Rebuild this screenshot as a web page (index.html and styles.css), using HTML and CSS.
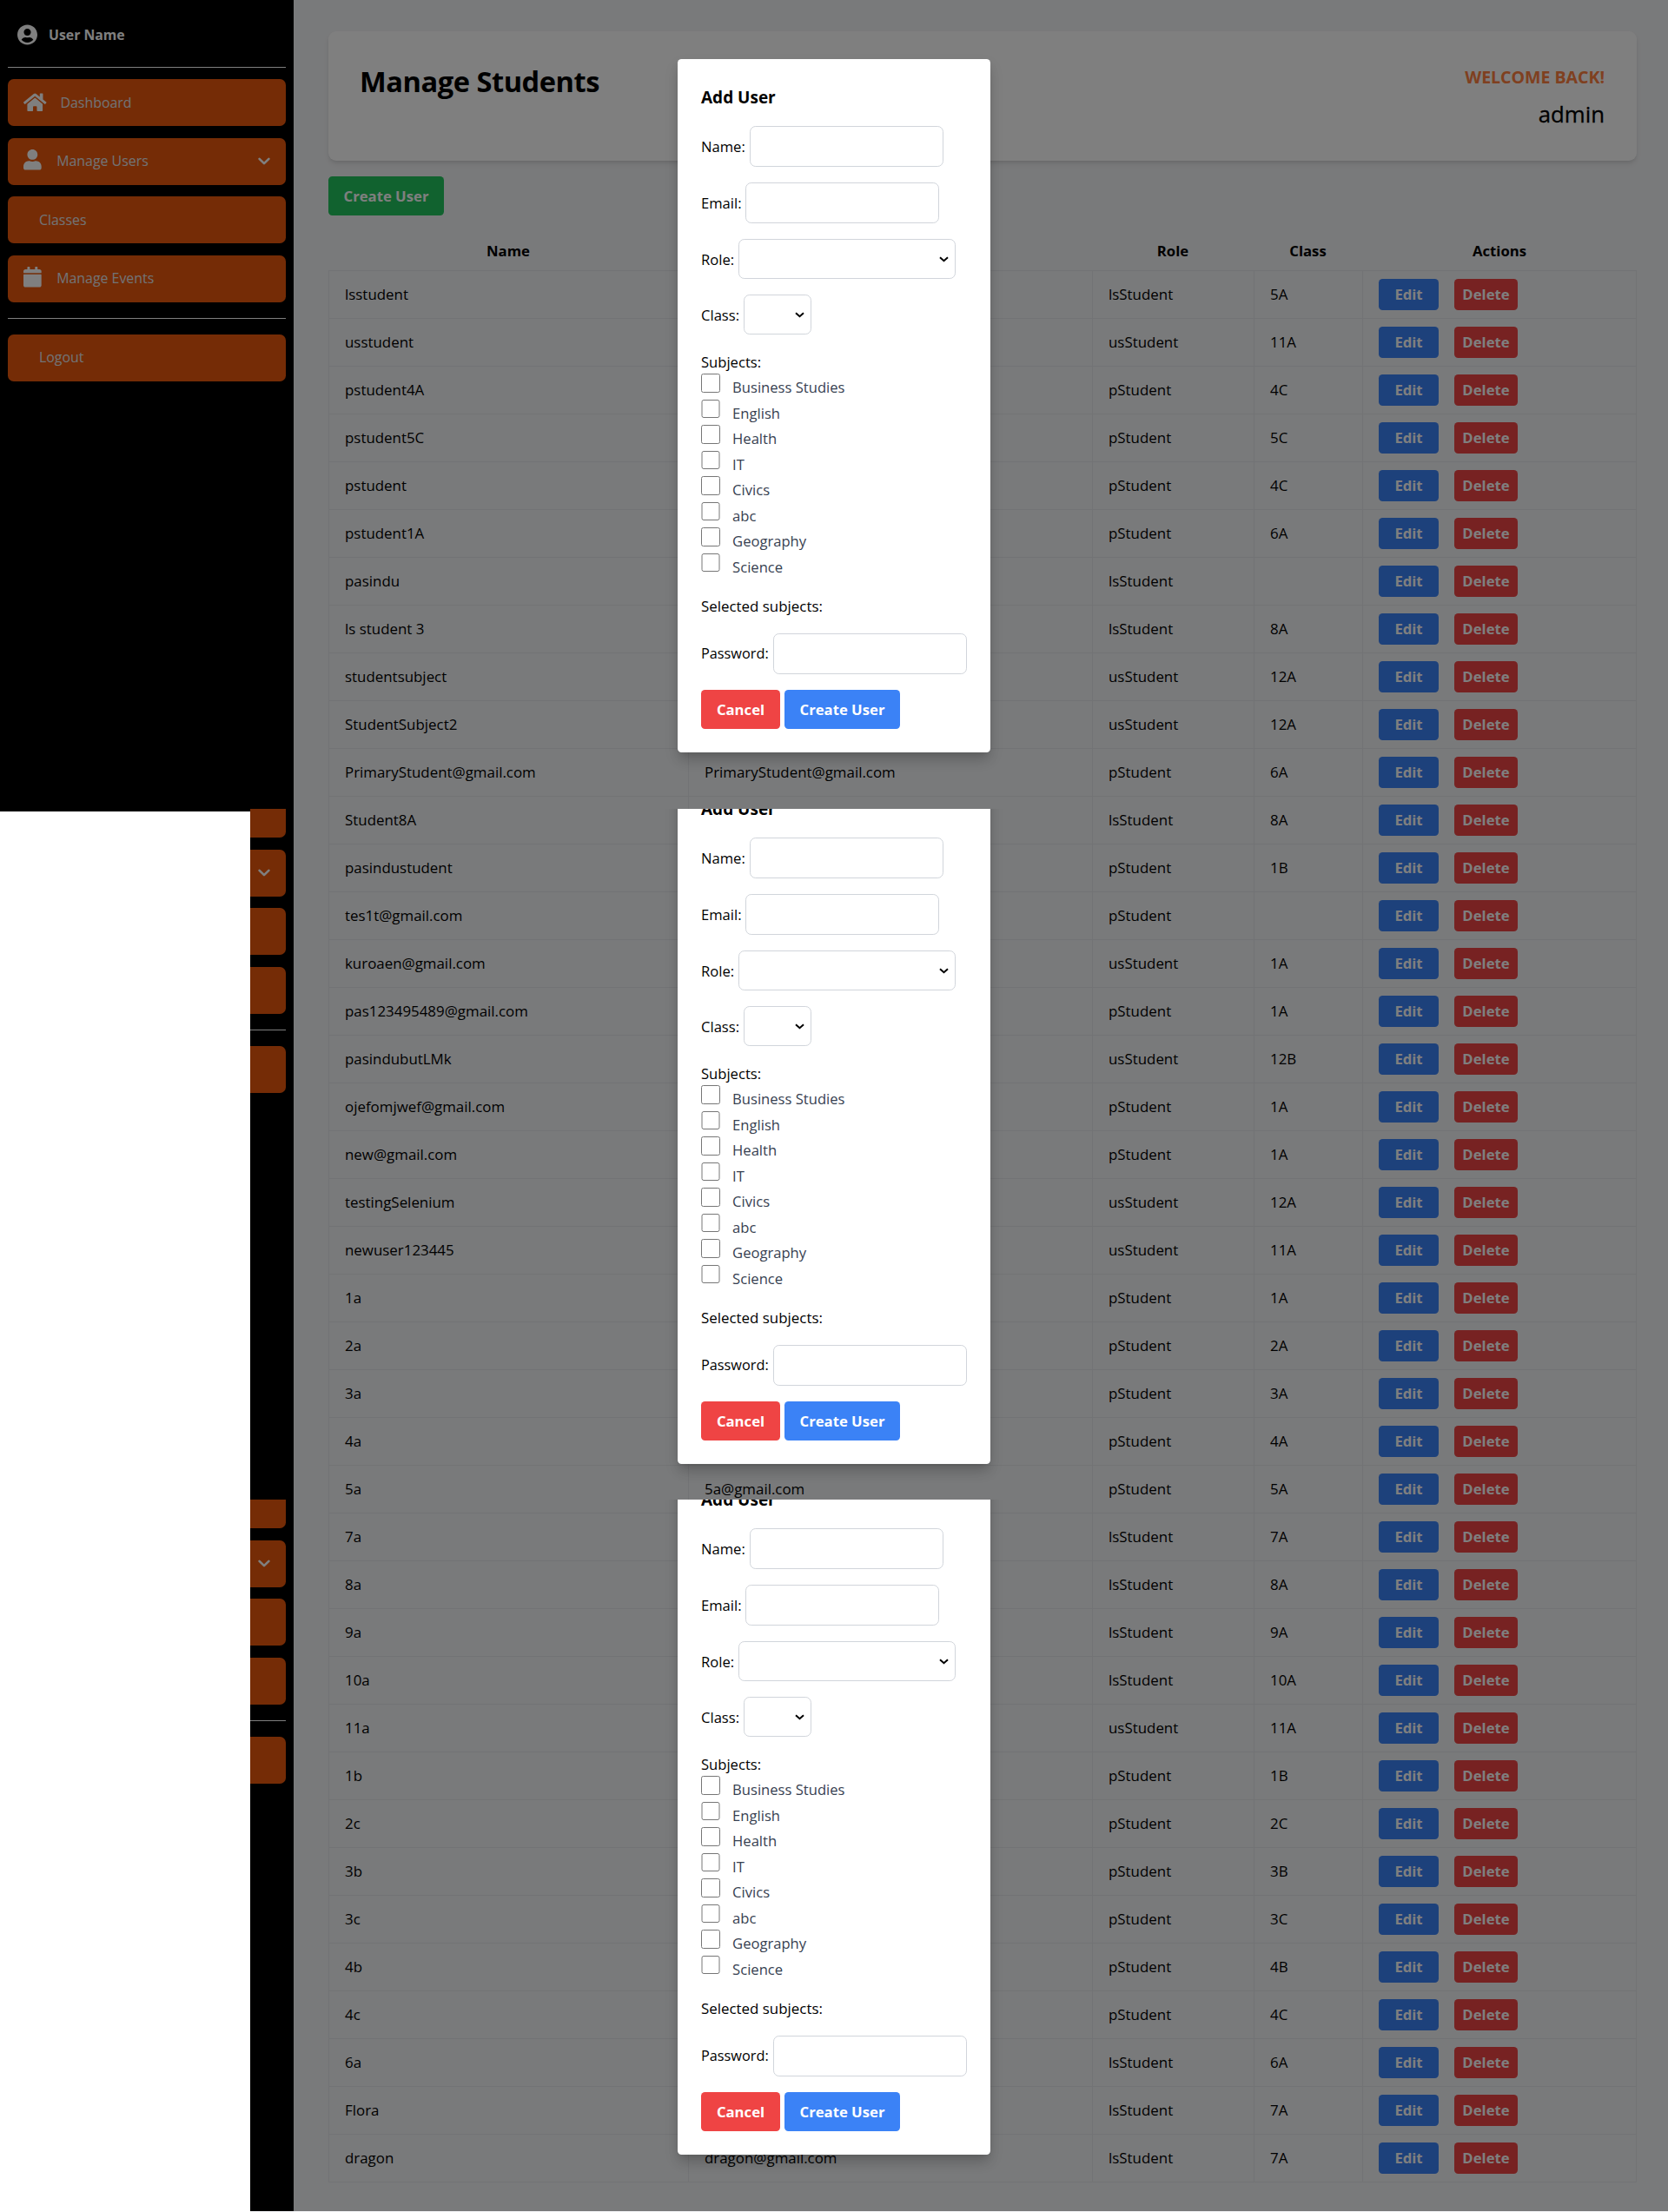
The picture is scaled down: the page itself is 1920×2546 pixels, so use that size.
FILE: index.html
```html
<!DOCTYPE html>
<html lang="en">
<head>
<meta charset="utf-8">
<title>Manage Students</title>
<link rel="stylesheet" href="styles.css">
</head>
<body>
<div class="page">
  <main class="content">
    <header class="banner">
      <h1 class="banner-title">Manage Students</h1>
      <div class="banner-user">
        <p class="welcome">WELCOME BACK!</p>
        <p class="admin">admin</p>
      </div>
    </header>
    <button class="btn btn-green">Create User</button>
    <table class="students">
      <colgroup><col class="c-name"><col class="c-email"><col class="c-role"><col class="c-class"><col class="c-actions"></colgroup>
      <thead><tr><th>Name</th><th></th><th>Role</th><th>Class</th><th>Actions</th></tr></thead>
      <tbody id="rows"></tbody>
    </table>
  </main>
  <div class="frames" id="frames">
    <section class="frame frame-1"></section>
    <section class="frame frame-2"></section>
    <section class="frame frame-3"></section>
  </div>
  <div class="blank"></div>
</div>

<template id="frame-content">
  <div class="frame-body">
    <aside class="sidebar">
      <div class="profile">
        <svg class="icon-profile" viewBox="0 0 496 512"><path d="M248 8C111 8 0 119 0 256s111 248 248 248 248-111 248-248S385 8 248 8zm0 96c48.6 0 88 39.4 88 88s-39.4 88-88 88-88-39.4-88-88 39.4-88 88-88zm0 344c-58.7 0-111.3-26.6-146.5-68.2 18.8-35.4 55.6-59.8 98.5-59.8 2.4 0 4.8.4 7.1 1.1 13 4.2 26.6 6.9 40.9 6.9 14.3 0 28-2.7 40.9-6.9 2.3-.7 4.7-1.1 7.1-1.1 42.9 0 79.7 24.4 98.5 59.8C359.3 421.4 306.7 448 248 448z"/></svg>
        <span class="profile-name">User Name</span>
      </div>
      <nav class="menu">
        <a class="item item-home"><svg class="icon-home" viewBox="0 0 576 512"><path d="M280.37 148.26L96 300.11V464a16 16 0 0 0 16 16l112.06-.29a16 16 0 0 0 15.92-16V368a16 16 0 0 1 16-16h64a16 16 0 0 1 16 16v95.64a16 16 0 0 0 16 16.05L464 480a16 16 0 0 0 16-16V300L295.67 148.26a12.19 12.19 0 0 0-15.3 0zM571.6 251.47L488 182.56V44.05a12 12 0 0 0-12-12h-56a12 12 0 0 0-12 12v72.61L318.47 43a48 48 0 0 0-61 0L4.34 251.47a12 12 0 0 0-1.6 16.9l25.5 31A12 12 0 0 0 45.15 301l235.22-193.74a12.19 12.19 0 0 1 15.3 0L530.9 301a12 12 0 0 0 16.9-1.6l25.5-31a12 12 0 0 0-1.7-16.93z"/></svg><span>Dashboard</span></a>
        <a class="item"><svg class="icon" viewBox="0 0 448 512"><path d="M224 256c70.7 0 128-57.3 128-128S294.7 0 224 0 96 57.3 96 128s57.3 128 128 128zm89.6 32h-16.7c-22.2 10.2-46.9 16-72.9 16s-50.6-5.8-72.9-16h-16.7C60.2 288 0 348.2 0 422.4V464c0 26.5 21.5 48 48 48h352c26.5 0 48-21.5 48-48v-41.6c0-74.2-60.2-134.4-134.4-134.4z"/></svg><span>Manage Users</span><svg class="chevron" viewBox="0 0 14 10"><path d="M1.6 1.8 7 7.2l5.4-5.4"/></svg></a>
        <a class="item item-plain"><span>Classes</span></a>
        <a class="item"><svg class="icon" viewBox="0 0 448 512"><path d="M12 192h424c6.6 0 12 5.4 12 12v260c0 26.5-21.5 48-48 48H48c-26.5 0-48-21.5-48-48V204c0-6.6 5.4-12 12-12zm436-44v-36c0-26.5-21.5-48-48-48h-48V12c0-6.6-5.4-12-12-12h-40c-6.6 0-12 5.4-12 12v52H160V12c0-6.6-5.4-12-12-12h-40c-6.6 0-12 5.4-12 12v52H48C21.5 64 0 85.5 0 112v36c0 6.6 5.4 12 12 12h424c6.6 0 12-5.4 12-12z"/></svg><span>Manage Events</span></a>
      </nav>
      <div class="logout"><a class="item item-plain"><span>Logout</span></a></div>
    </aside>
    <div class="shade"></div>
    <form class="modal">
      <h2 class="modal-title">Add User</h2>
      <div class="field"><label class="l-name">Name:</label><input class="input" type="text"></div>
      <div class="field"><label class="l-email">Email:</label><input class="input" type="text"></div>
      <div class="field"><label class="l-role">Role:</label><select class="select select-role"><option></option></select></div>
      <div class="field"><label class="l-class">Class:</label><select class="select select-class"><option></option></select></div>
      <p class="subjects-title">Subjects:</p>
      <div class="subjects">
        <label class="subject"><input type="checkbox"><span>Business Studies</span></label>
        <label class="subject"><input type="checkbox"><span>English</span></label>
        <label class="subject"><input type="checkbox"><span>Health</span></label>
        <label class="subject"><input type="checkbox"><span>IT</span></label>
        <label class="subject"><input type="checkbox"><span>Civics</span></label>
        <label class="subject"><input type="checkbox"><span>abc</span></label>
        <label class="subject"><input type="checkbox"><span>Geography</span></label>
        <label class="subject"><input type="checkbox"><span>Science</span></label>
      </div>
      <p class="selected">Selected subjects:</p>
      <div class="field"><label class="l-password">Password:</label><input class="input" type="text"></div>
      <div class="modal-actions">
        <button type="button" class="btn btn-red">Cancel</button>
        <button type="button" class="btn btn-blue">Create User</button>
      </div>
    </form>
  </div>
</template>
<script src="app.js"></script>
</body>
</html>
```
FILE: styles.css
```css
* { box-sizing: border-box; margin: 0; padding: 0; }
html { font-size: 18px; }
body {
  font-family: "Open Sans", "Noto Sans", sans-serif;
  font-size: 16.9px;
  line-height: 27px;
  color: #000;
  background: #f3f4f6;
}
button, input, select { font: inherit; }

.page { position: relative; width: 1920px; height: 2546px; overflow: hidden; }
.content { padding: 36px 36px 0 378px; }

.banner {
  display: flex;
  justify-content: space-between;
  height: 149px;
  padding: 36px 37px 0 36px;
  margin-bottom: 18px;
  background: #fff;
  border-radius: 9px;
  box-shadow: 0 4px 6px -1px rgba(0, 0, 0, .1), 0 2px 4px -2px rgba(0, 0, 0, .1);
}
.banner-title { font-size: 32.6px; line-height: 44px; font-weight: 700; letter-spacing: -.45px; }
.banner-user { text-align: right; }
.welcome { font-size: 19.6px; line-height: 34px; font-weight: 700; letter-spacing: -.05px; color: #ff8040; }
.admin { font-size: 25.8px; line-height: 36px; padding-top: 7px; height: 45px; -webkit-text-stroke: .3px #000; }

.btn {
  display: inline-flex;
  align-items: center;
  justify-content: center;
  height: 45px;
  border: 0;
  border-radius: 4.5px;
  color: #fff;
  font-weight: 700;
  font-size: 16.7px;
  white-space: nowrap;
}
.btn-green { display: flex; width: 133px; background: #22c55e; }
.btn-red { width: 91px; background: #ef4444; }
.btn-blue { width: 133px; background: #3b82f6; }

.students { width: 1506px; margin-top: 18px; table-layout: fixed; border-spacing: 0; }
.c-name { width: 414px; }
.c-email { width: 465px; }
.c-role { width: 186px; }
.c-class { width: 125px; }
.c-actions { width: 316px; }
.students th { height: 45px; font-weight: 700; text-align: center; font-size: 16.7px; }
.students td {
  height: 55px;
  padding: 0 18px 2px;
  border-top: 1px solid #e5e7eb;
  border-left: 1px solid #e5e7eb;
  vertical-align: middle;
}
.students td:last-child { border-right: 1px solid #e5e7eb; padding-bottom: 0; }
.students tr:last-child td { border-bottom: 1px solid #e5e7eb; height: 56px; }
.row-actions { display: flex; gap: 18px; }
.row-actions .btn { height: 36px; padding-bottom: 1px; }
.row-actions .btn-blue { width: 69px; }
.row-actions .btn-red { width: 73px; }

.frames { position: absolute; inset: 0; display: flex; flex-direction: column; }
.frame { position: relative; overflow: hidden; }
.frame-1 { height: 931px; }
.frame-2 { height: 795px; }
.frame-3 { height: 820px; }
.frame-body { position: relative; height: 931px; }
.frame-2 .frame-body, .frame-3 .frame-body { margin-top: -112px; }
.shade { position: absolute; inset: 0; background: rgba(0, 0, 0, .5); }
.blank { position: absolute; left: 0; top: 931px; width: 288px; bottom: 0; border-top: 3px solid #000; background: #fff; }

.sidebar { width: 338px; height: 100%; padding: 0 9px; background: #000; color: #fff; }
.sidebar svg { fill: currentColor; flex: none; }
.profile { display: flex; align-items: center; gap: 13px; height: 78px; padding: 2px 11px 0; border-bottom: 1px solid #fff; }
.icon-profile { width: 23px; height: 24px; }
.profile-name { font-weight: 700; font-size: 15.8px; padding-top: 2px; }
.menu { display: flex; flex-direction: column; gap: 13.5px; padding: 13px 0 18px; border-bottom: 1px solid #fff; }
.item {
  display: flex;
  align-items: center;
  gap: 17.5px;
  height: 54px;
  padding: 0 18px;
  border-radius: 6.75px;
  background: #ea580c;
}
.item span { color: #e5e7eb; font-size: 15.9px; }
.item-home { gap: 16px; }
.item-plain { padding-left: 36px; }
.icon-home { width: 26.5px; height: 23.6px; }
.icon { width: 20.7px; height: 23.6px; margin-top: -3px; }
.chevron { width: 14px; height: 10px; margin-left: auto; }
.sidebar .chevron path { fill: none; stroke: #fff; stroke-width: 2.6; stroke-linecap: round; stroke-linejoin: round; }
.logout { padding-top: 18px; }
.frame-2 .sidebar span, .frame-3 .sidebar span { visibility: hidden; }

.modal {
  position: absolute;
  left: 780px;
  top: 68px;
  width: 360px;
  height: 798px;
  padding: 27px;
  background: #fff;
  border-radius: 4.5px;
  font-size: 16.6px;
  box-shadow: 0 10px 15px -3px rgba(0, 0, 0, .1), 0 4px 6px -4px rgba(0, 0, 0, .1), 0 8px 16px rgba(0, 0, 0, .12);
}
.modal-title { height: 50px; line-height: 34px; font-size: 19px; font-weight: 700; }
.field { display: flex; align-items: center; margin-bottom: 18px; white-space: nowrap; }
.input { width: 223px; height: 47px; border: 1px solid #d1d5db; border-radius: 6.75px; background: #fff; }
.select {
  height: 46px;
  padding: 9px;
  border: 1px solid #d1d5db;
  border-radius: 6.75px;
  color: #000;
  appearance: none;
  background: #fff url("data:image/svg+xml,%3Csvg xmlns='http://www.w3.org/2000/svg' width='11' height='7' viewBox='0 0 11 7'%3E%3Cpath d='M1 1.2 5.5 5.2 10 1.2' fill='none' stroke='%23000' stroke-width='2'/%3E%3C/svg%3E") no-repeat right 7px center;
}
.select-role { width: 250px; }
.select-class { width: 78px; }
.l-name { width: 56px; }
.l-email { width: 51px; }
.l-role { width: 43px; }
.l-class { width: 49px; }
.l-password { width: 83px; font-size: 16.3px; }
.subjects-title { height: 27px; }
.subject { display: flex; align-items: flex-start; gap: 14.5px; height: 29.5px; color: #374151; }
.subject input { width: 21.6px; height: 21.6px; flex: none; }
.subject span { padding-top: 2px; }
.selected { height: 45px; margin-top: 18px; font-size: 16.9px; }
.modal-actions { display: flex; gap: 5px; }
```
FILE: app.js
```js
const students = [
  ["lsstudent", "", "lsStudent", "5A"], ["usstudent", "", "usStudent", "11A"],
  ["pstudent4A", "", "pStudent", "4C"], ["pstudent5C", "", "pStudent", "5C"],
  ["pstudent", "", "pStudent", "4C"], ["pstudent1A", "", "pStudent", "6A"],
  ["pasindu", "", "lsStudent", ""], ["ls student 3", "", "lsStudent", "8A"],
  ["studentsubject", "", "usStudent", "12A"], ["StudentSubject2", "", "usStudent", "12A"],
  ["PrimaryStudent@gmail.com", "PrimaryStudent@gmail.com", "pStudent", "6A"],
  ["Student8A", "", "lsStudent", "8A"], ["pasindustudent", "", "pStudent", "1B"],
  ["tes1t@gmail.com", "", "pStudent", ""], ["kuroaen@gmail.com", "", "usStudent", "1A"],
  ["pas123495489@gmail.com", "", "pStudent", "1A"], ["pasindubutLMk", "", "usStudent", "12B"],
  ["ojefomjwef@gmail.com", "", "pStudent", "1A"], ["new@gmail.com", "", "pStudent", "1A"],
  ["testingSelenium", "", "usStudent", "12A"], ["newuser123445", "", "usStudent", "11A"],
  ["1a", "", "pStudent", "1A"], ["2a", "", "pStudent", "2A"], ["3a", "", "pStudent", "3A"],
  ["4a", "", "pStudent", "4A"], ["5a", "5a@gmail.com", "pStudent", "5A"],
  ["7a", "", "lsStudent", "7A"], ["8a", "", "lsStudent", "8A"], ["9a", "", "lsStudent", "9A"],
  ["10a", "", "lsStudent", "10A"], ["11a", "", "usStudent", "11A"], ["1b", "", "pStudent", "1B"],
  ["2c", "", "pStudent", "2C"], ["3b", "", "pStudent", "3B"], ["3c", "", "pStudent", "3C"],
  ["4b", "", "pStudent", "4B"], ["4c", "", "pStudent", "4C"], ["6a", "", "lsStudent", "6A"],
  ["Flora", "", "lsStudent", "7A"], ["dragon", "dragon@gmail.com", "lsStudent", "7A"]
];

const actions = '<td><div class="row-actions"><button class="btn btn-blue">Edit</button>' +
  '<button class="btn btn-red">Delete</button></div></td>';

document.getElementById("rows").innerHTML = students
  .map(cells => "<tr>" + cells.map(c => "<td>" + c + "</td>").join("") + actions + "</tr>")
  .join("");

const frameContent = document.getElementById("frame-content");
document.querySelectorAll(".frame").forEach(frame => {
  frame.appendChild(frameContent.content.cloneNode(true));
});
```
